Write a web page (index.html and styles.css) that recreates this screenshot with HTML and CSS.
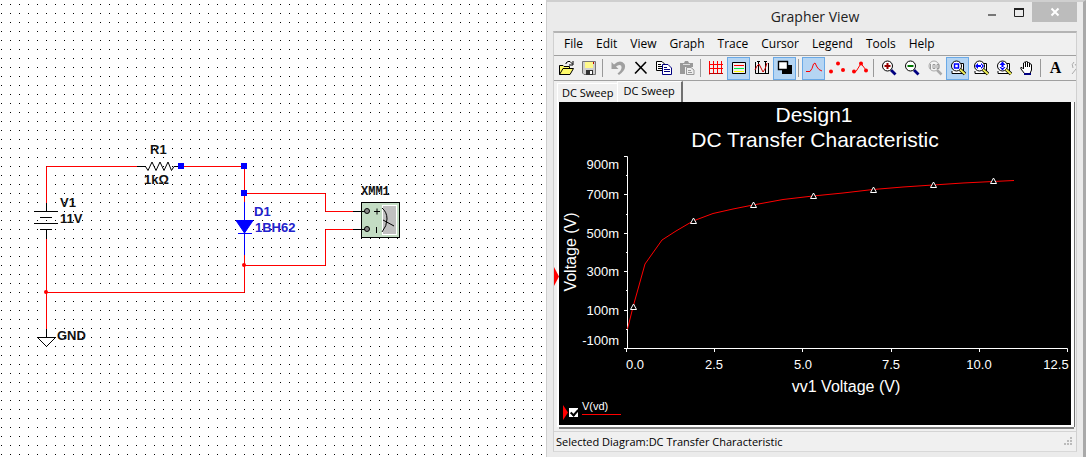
FILE: index.html
```html
<!DOCTYPE html>
<html lang="en">
<head>
<meta charset="utf-8">
<title>Grapher View</title>
<link rel="stylesheet" href="styles.css">
</head>
<body>
<main class="workspace">
  <section class="schematic" aria-label="Schematic">
    <svg class="circuit" width="546" height="457" viewBox="0 0 546 457">
      <g class="wire">
        <path d="M46.500 205V166.500H137M181 166.500H244.500V202M244.500 193.500H325.500V211.500H354M354 229.500H325.500V265.500H244.500M244.500 255V292.500H46.500M46.500 239V329"/>
      </g>
      <g class="lead">
        <path d="M137 166.500H145.500L148 170.500L152 162L156 170.500L160 162L164 170.500L168 162L171.500 170.500L174 166.500H181"/>
        <path d="M46.500 203V211.500M34 211.500H58M40 217.500H52M34 223.500H58M40 229.500H52M46.500 230V239"/>
        <path d="M46.500 329V337.500M37.500 337.500H55.500L46.500 346.500Z"/>
        <path d="M353 211.500H366M353 229.500H366"/>
      </g>
      <path class="diode" d="M244.500 202V255M236 220.500H253L244.500 233ZM238 233.500H252"/>
      <g class="handle">
        <rect x="178" y="163" width="6" height="6"/><rect x="241" y="163" width="6" height="6"/><rect x="241" y="190" width="6" height="6"/>
      </g>
      <g class="joint"><circle cx="244" cy="265" r="2"/><circle cx="46" cy="292" r="2"/></g>
      <rect class="meter" x="361.500" y="202.500" width="38" height="35"/>
      <rect class="meter-face" x="382.500" y="205.500" width="14" height="29"/>
      <path class="lead" d="M361 211.500H369M361 229.500H369M374 211.500H380M377 208.500V214.500M376.500 227V233M382 208Q387 212 387 219T382 232M383 220L394 226"/>
      <g class="pin"><circle cx="367" cy="211" r="2.500"/><circle cx="367" cy="229" r="2.500"/></g>
      <g class="part">
        <text x="150" y="154">R1</text><text x="144" y="184">1kΩ</text>
        <text x="60" y="207">V1</text><text x="60" y="223">11V</text><text x="57" y="340">GND</text>
        <g class="picked"><text x="254" y="216">D1</text><text x="255" y="232">1BH62</text></g>
        <text class="mono" x="361" y="195">XMM1</text>
      </g>
    </svg>
  </section>

  <section class="window" aria-label="Grapher View">
    <header class="titlebar">
      <h1 class="title">Grapher View</h1>
      <div class="controls">
        <button class="control" aria-label="Minimize"><svg width="12" height="12"><path d="M2 9H10" stroke="#777" stroke-width="2"/></svg></button>
        <button class="control" aria-label="Maximize"><svg width="12" height="12"><path d="M1.500 3V10.500H10.500V3" fill="none" stroke="#222"/><path d="M1 3H11" stroke="#222" stroke-width="2"/></svg></button>
        <button class="control close" aria-label="Close"><svg width="10" height="10"><path d="M1.500 1.500L8.500 8.500M8.500 1.500L1.500 8.500" stroke="#fff" stroke-width="2"/></svg></button>
      </div>
    </header>
    <div class="client">
      <nav class="menu">
        <button>File</button><button>Edit</button><button>View</button><button>Graph</button><button>Trace</button><button>Cursor</button><button>Legend</button><button>Tools</button><button>Help</button>
      </nav>
      <div class="toolbar">
        <button class="tool" aria-label="Open"><svg viewBox="0 0 16 16"><path d="M1.500 14.500V5.500H5L6 6.500H11.500V8.500M1.500 14.500L5 8.500H15.500L12 14.500Z" fill="#fffb6b" stroke="#000"/><path d="M8 4V3L10 1.500H12L14.500 4M15 1V5H11" fill="none" stroke="#000"/></svg></button>
        <button class="tool" aria-label="Save"><svg viewBox="0 0 16 16"><path d="M1.500 1.500H14.500V14.500H3L1.500 13Z" fill="#d0d0d0" stroke="#777"/><path d="M4 2H12V8H4Z" fill="#fff98a"/><path d="M12.500 2V4" stroke="#b00"/><path d="M5 10H12V15H5Z" fill="#333"/><path d="M9 11H11V14H9Z" fill="#fff"/></svg></button>
        <i class="rule"></i>
        <button class="tool" aria-label="Undo"><svg viewBox="0 0 16 16"><path d="M1.500 2V9H8.500L6 6.500Q9 4 11 5.500Q13 9 7.500 13.500L9 15Q17 9 14.500 4Q10 -1 4 4.500Z" fill="#a0a0a0"/></svg></button>
        <button class="tool" aria-label="Delete"><svg viewBox="0 0 16 16"><path d="M2.500 2L13.500 13.500M13 2L2 13.500" stroke="#000" stroke-width="1.600"/></svg></button>
        <button class="tool" aria-label="Copy"><svg viewBox="0 0 16 16"><path d="M.5 1.500H6L8.500 4V10.500H.5Z" fill="#fff" stroke="#000"/><path d="M2 4.500H5M2 6.500H6M2 8.500H6" stroke="#000"/><path d="M6.500 4.500H12L15.500 8V14.500H6.500Z" fill="#fff" stroke="#000080"/><path d="M8 7.500H11M8 9.500H14M8 11.500H14" stroke="#000080"/></svg></button>
        <button class="tool" aria-label="Paste"><svg viewBox="0 0 16 16"><path d="M1 3H5L6 1H9L10 3H14V7H6V14H1Z" fill="#999"/><path d="M4 4.500H11" stroke="#ddd"/><path d="M7.500 7.500H12L15 10V14.500H7.500Z" fill="#eee" stroke="#999"/><path d="M9 10.500H12M9 12.500H13" stroke="#999"/></svg></button>
        <i class="rule"></i>
        <button class="tool" aria-label="Grid"><svg viewBox="0 0 16 16"><path d="M1.500 1V14.500M5.500 1V14M9.500 1V14M13.500 1V14M1 4.500H15M1 8.500H15" stroke="#f00" fill="none"/><path d="M1 13.500H15" stroke="#b00"/></svg></button>
        <button class="tool on" aria-label="Legend"><svg viewBox="0 0 16 16"><path d="M1.500 2.500H14.500V13.500H1.500Z" fill="#eee" stroke="#000"/><path d="M3 5.500H13" stroke="#f00"/><path d="M3 8.500H13" stroke="#0e4"/><path d="M3 11.500H13" stroke="#ff0"/></svg></button>
        <button class="tool" aria-label="Cursors"><svg viewBox="0 0 16 16"><path d="M1.500 2V13.500H14M4.500 1V14M11.500 1V14M3 1.500H6M10 1.500H13M14.500 3V14" fill="none" stroke="#000"/><path d="M1 10L3 6L5 4L7 8L9 12L11 9L13 3" fill="none" stroke="#c00"/></svg></button>
        <button class="tool on" aria-label="Black and white"><svg viewBox="0 0 16 16"><path d="M5 5H15V14H5Z"/><path d="M1.500 1.500H10.500V9.500H1.500Z" fill="#fff" stroke="#000" stroke-width="1.400"/></svg></button>
        <i class="rule"></i>
        <button class="tool on" aria-label="Lines"><svg viewBox="0 0 16 16"><path d="M0 11.500H4L6 8.500L7.500 4L9 3L11 7L13 9.500L16 11" fill="none" stroke="#f00"/></svg></button>
        <button class="tool" aria-label="Points"><svg viewBox="0 0 16 16" fill="#f00"><circle cx="2" cy="11.500" r="2"/><circle cx="9" cy="3.500" r="2"/><circle cx="14" cy="10" r="2"/></svg></button>
        <button class="tool" aria-label="Lines and points"><svg viewBox="0 0 16 16" fill="#f00"><path d="M2 11.500H4L9 3.500L14 10" fill="none" stroke="#f00"/><circle cx="2" cy="11.500" r="2"/><circle cx="9" cy="3.500" r="2"/><circle cx="14" cy="10.500" r="2"/></svg></button>
        <i class="rule"></i>
        <button class="tool" aria-label="Zoom in"><svg viewBox="0 0 16 16"><path d="M10 10L14.500 14.500" stroke="#000080" stroke-width="2.800"/><circle cx="6.500" cy="6" r="5" fill="#fff" stroke="#000"/><path d="M3.500 6H9.500M6.500 3V9" stroke="#900" stroke-width="2"/></svg></button>
        <button class="tool" aria-label="Zoom out"><svg viewBox="0 0 16 16"><path d="M10 10L14.500 14.500" stroke="#000080" stroke-width="2.800"/><circle cx="6.500" cy="6" r="5" fill="#fff" stroke="#000"/><path d="M3.500 6H9.500" stroke="#070" stroke-width="2"/></svg></button>
        <button class="tool" aria-label="Zoom 100%"><svg viewBox="0 0 16 16"><path d="M10 10L14.500 14.500" stroke="#aaa" stroke-width="2.500"/><circle cx="7" cy="6" r="5" fill="#f4f4f4" stroke="#aaa"/><path d="M3.500 4V9M6 4.500H8V8.500H6ZM10 4.500H12V8.500H10Z" fill="none" stroke="#999"/></svg></button>
        <button class="tool on" aria-label="Zoom full"><svg viewBox="0 0 16 16"><path d="M9 3.500H13.500V13.500H2V11" fill="#fff" stroke="#000"/><circle cx="6.500" cy="6" r="5" fill="#fff" stroke="#000"/><path d="M4.500 4H8.500V8H4.500Z" fill="#fff" stroke="#00f" stroke-width="1.500"/><path d="M10 9.500L15 14" stroke="#000" stroke-width="3.500"/><path d="M10 9.500L15 14" stroke="#ee5" stroke-width="2"/></svg></button>
        <button class="tool" aria-label="Zoom horizontal"><svg viewBox="0 0 16 16"><path d="M9 3.500H13.500V13.500H2V11" fill="#fff" stroke="#000"/><circle cx="6.500" cy="6" r="5" fill="#fff" stroke="#000"/><path d="M2 6L5 3V9ZM11 6L8 3V9ZM4 5H9V7H4Z" fill="#00f"/><path d="M10 9.500L15 14" stroke="#000" stroke-width="3.500"/><path d="M10 9.500L15 14" stroke="#ee5" stroke-width="2"/></svg></button>
        <button class="tool" aria-label="Zoom vertical"><svg viewBox="0 0 16 16"><path d="M9 3.500H13.500V13.500H2V11" fill="#fff" stroke="#000"/><circle cx="6.500" cy="6" r="5" fill="#fff" stroke="#000"/><path d="M6.500 1.500L9.500 5H3.500ZM6.500 10.500L9.500 7H3.500ZM5.500 4H7.500V8H5.500Z" fill="#00f"/><path d="M10 9.500L15 14" stroke="#000" stroke-width="3.500"/><path d="M10 9.500L15 14" stroke="#ee5" stroke-width="2"/></svg></button>
        <button class="tool" aria-label="Pan"><svg viewBox="0 0 16 16"><path d="M5.500 13.500L2 9Q1 7 3 7.500L4.500 9V3Q5.500 1.500 6.500 3V2Q7.500 0 8.500 2V3Q9.500 1 10.500 3V4Q12 3 12.500 5V10L11 13.500Z" fill="#fff" stroke="#000"/><path d="M6.500 3V7M8.500 3V7M10.500 4V7" stroke="#000"/><path d="M5 14H12" stroke="#000080" stroke-width="2"/></svg></button>
        <i class="rule"></i>
        <button class="tool letter" aria-label="Text">A</button>
        <button class="tool" aria-label="Export"><svg viewBox="0 0 16 16"><path d="M3 2Q0 4 2 8M1 14L9 4M4 4L9 11" fill="none" stroke="#aaa"/></svg></button>
      </div>
      <div class="tabs">
        <button class="tab">DC Sweep</button><button class="tab current">DC Sweep</button>
      </div>
      <div class="page">
        <svg class="chart" viewBox="559 102 512 296" role="img" aria-label="DC Transfer Characteristic">
          <path d="M554 267L559 276.500L554 286Z" fill="#f00"/>
          <g class="heading"><text x="814" y="122">Design1</text><text x="815" y="147">DC Transfer Characteristic</text></g>
          <path class="axis" d="M624 156.500H627.500V348.500M624 348.500H1067.500V352M626.500 348V352M714.500 348V352M802.500 348V352M891.500 348V352M979.500 348V352M624 194.500H627M624 233.500H627M624 271.500H627M624 310.500H627M626 175.500H628M626 214.500H628M626 252.500H628M626 290.500H628M626 329.500H628"/>
          <g class="ylabel"><text x="619" y="169">900m</text><text x="619" y="199">700m</text><text x="619" y="238">500m</text><text x="619" y="276">300m</text><text x="619" y="315">100m</text><text x="619" y="345">-100m</text></g>
          <g class="xlabel"><text x="635" y="369">0.0</text><text x="714" y="369">2.5</text><text x="803" y="369">5.0</text><text x="891" y="369">7.5</text><text x="979" y="369">10.0</text><text x="1056" y="369">12.5</text></g>
          <text class="caption" x="846" y="392">vv1 Voltage (V)</text>
          <text class="caption" transform="translate(576 252) rotate(-90)">Voltage (V)</text>
          <path class="trace" d="M627.500 329L633 307L645 264L662 240L676 231L693 221L713 213.500L733 209L753 205L783 199.500L813 196L843 193L873 189.500L903 187L933 185L963 183L993 181.500L1014 180.500"/>
          <path class="mark" d="M630.500 309.500L633.500 304L636.500 309.500ZM690.500 223.500L693.500 218L696.500 223.500ZM750.500 207.500L753.500 202L756.500 207.500ZM810.500 198.500L813.500 193L816.500 198.500ZM870.500 192.500L873.500 187L876.500 192.500ZM930.500 187.500L933.500 182L936.500 187.500ZM990.500 183.500L993.500 178L996.500 183.500Z"/>
        </svg>
        <label class="legend">
          <svg width="5" height="15"><path d="M0 0L5 7.500L0 15Z" fill="#f00"/></svg>
          <input class="check" type="checkbox" checked>
          <span class="series">V(vd)</span>
        </label>
      </div>
      <footer class="status"><span>Selected Diagram:DC Transfer Characteristic</span>
        <svg width="9" height="9" fill="#bbb"><path d="M6 0H8V2H6ZM3 3H5V5H3ZM6 3H8V5H6ZM0 6H2V8H0ZM3 6H5V8H3ZM6 6H8V8H6Z"/></svg>
      </footer>
    </div>
  </section>
</main>
</body>
</html>
```
FILE: styles.css
```css
* { box-sizing: border-box; }
body { margin: 0; font-family: "Open Sans", "Noto Sans", sans-serif; color: #000; background: #fff; }
button { margin: 0; padding: 0; border: 0; background: none; font: inherit; color: inherit; }
svg { display: block; }

.workspace { display: grid; grid-template-columns: 91fr 90fr; min-height: 100vh; }
.schematic {
  overflow: hidden;
  background-image: linear-gradient(90deg, transparent 1px, #fff 1px), linear-gradient(#000 1px, transparent 1px);
  background-size: 9px 9px;
  background-position: 1px 4px;
}
.wire { fill: none; stroke: #f00; }
.lead { fill: none; stroke: #000; }
.diode { fill: #00f; stroke: #00f; }
.handle { fill: #00f; }
.joint { fill: #f00; }
.meter { fill: #c3dcc3; stroke: #000; }
.meter-face { fill: #c0c0c0; stroke: #fff; }
.pin { fill: #888; stroke: #000; }
.part { font: bold 13px "Liberation Sans", Arial, sans-serif; fill: #111; }
.picked { fill: #22c; }
.mono { font: bold 12px "Liberation Mono", monospace; }

.window {
  display: flex; flex-direction: column; min-width: 0;
  padding: 0 6px 5px 6px;
  background: #ebebeb;
  border: solid #cfcfcf; border-width: 2px 3px 0 1px; border-right-color: #a9a9a9;
}
.titlebar { display: grid; grid-template-columns: 1fr auto; height: 29px; }
.title { grid-area: 1 / 1 / 2 / 3; margin: 0; text-align: center; font-size: 14px; line-height: 30px; font-weight: 400; color: #222; }
.controls { grid-area: 1 / 2; display: flex; align-items: flex-start; }
.control { display: flex; align-items: center; justify-content: center; width: 27px; height: 20px; }
.close { width: 45px; background: #bcbcbc; }

.client { flex: 1; display: flex; flex-direction: column; min-width: 0; background: #f0f0f0; border: 1px solid #d0d0d0; border-top: 2px solid #b4b4b4; border-bottom-color: #d8d8d8; }
.menu { display: flex; align-items: center; gap: 13px; height: 22px; padding: 0 0 2px 10px; font-size: 12px; }
.toolbar { display: flex; align-items: center; height: 26px; overflow: hidden; border: solid #a0a0a0; border-width: 1px 0; }
.tool { display: flex; flex: 0 0 23px; align-items: center; justify-content: center; height: 23px; }
.tool svg { width: 16px; height: 16px; }
.on { background: #b5d5f3; border: 1px solid #6aa9e6; }
.rule { flex: 0 0 6px; height: 18px; background: linear-gradient(90deg, transparent 2px, #999 2px, #999 3px, transparent 3px); }
.letter { font: bold 16px "Liberation Serif", serif; }
.tabs { display: flex; align-items: flex-end; height: 21px; padding-left: 3px; font-size: 11px; }
.tab { height: 19px; padding: 0 4px 2px; border: solid #fff; border-width: 1px 0 0 1px; }
.current { height: 21px; padding: 0 6px 4px 5px; border-right: 2px solid #707070; }

.page { flex: 1; margin: 0 2px 4px 5px; background: #000; border: solid #fff; border-width: 0 3px 2px 0; box-shadow: 0 2px 0 #808080, 1px 0 0 #707070, -2px 0 0 #fff; }
.chart { width: 100%; height: auto; overflow: visible; }
.chart text { font-family: "Liberation Sans", Arial, sans-serif; fill: #fff; }
.heading { font-size: 21px; text-anchor: middle; }
.ylabel { font-size: 13px; text-anchor: end; }
.xlabel { font-size: 13px; text-anchor: middle; }
.caption { font-size: 16px; text-anchor: middle; }
.axis { fill: none; stroke: #fff; }
.trace { fill: none; stroke: #f00; }
.mark { fill: #000; stroke: #fff; }
.legend { display: flex; align-items: flex-end; width: max-content; padding: 0 0 0 4px; color: #fff; }
.check { appearance: none; position: relative; width: 9px; height: 9px; margin: 0 4px 3px 1px; background: #fff; }
.check:checked::after { content: ""; position: absolute; left: 3px; top: 0; width: 3px; height: 6px; border: solid #000; border-width: 0 2px 2px 0; transform: rotate(42deg); }
.series { width: 39px; margin-bottom: 5px; border-bottom: 1px solid #f00; font: 11px/16px "Liberation Sans", Arial, sans-serif; }
.status { display: flex; align-items: center; justify-content: space-between; height: 20px; padding: 0 3px 0 2px; border-top: 1px solid #d4d4d4; font-size: 11px; }
```
